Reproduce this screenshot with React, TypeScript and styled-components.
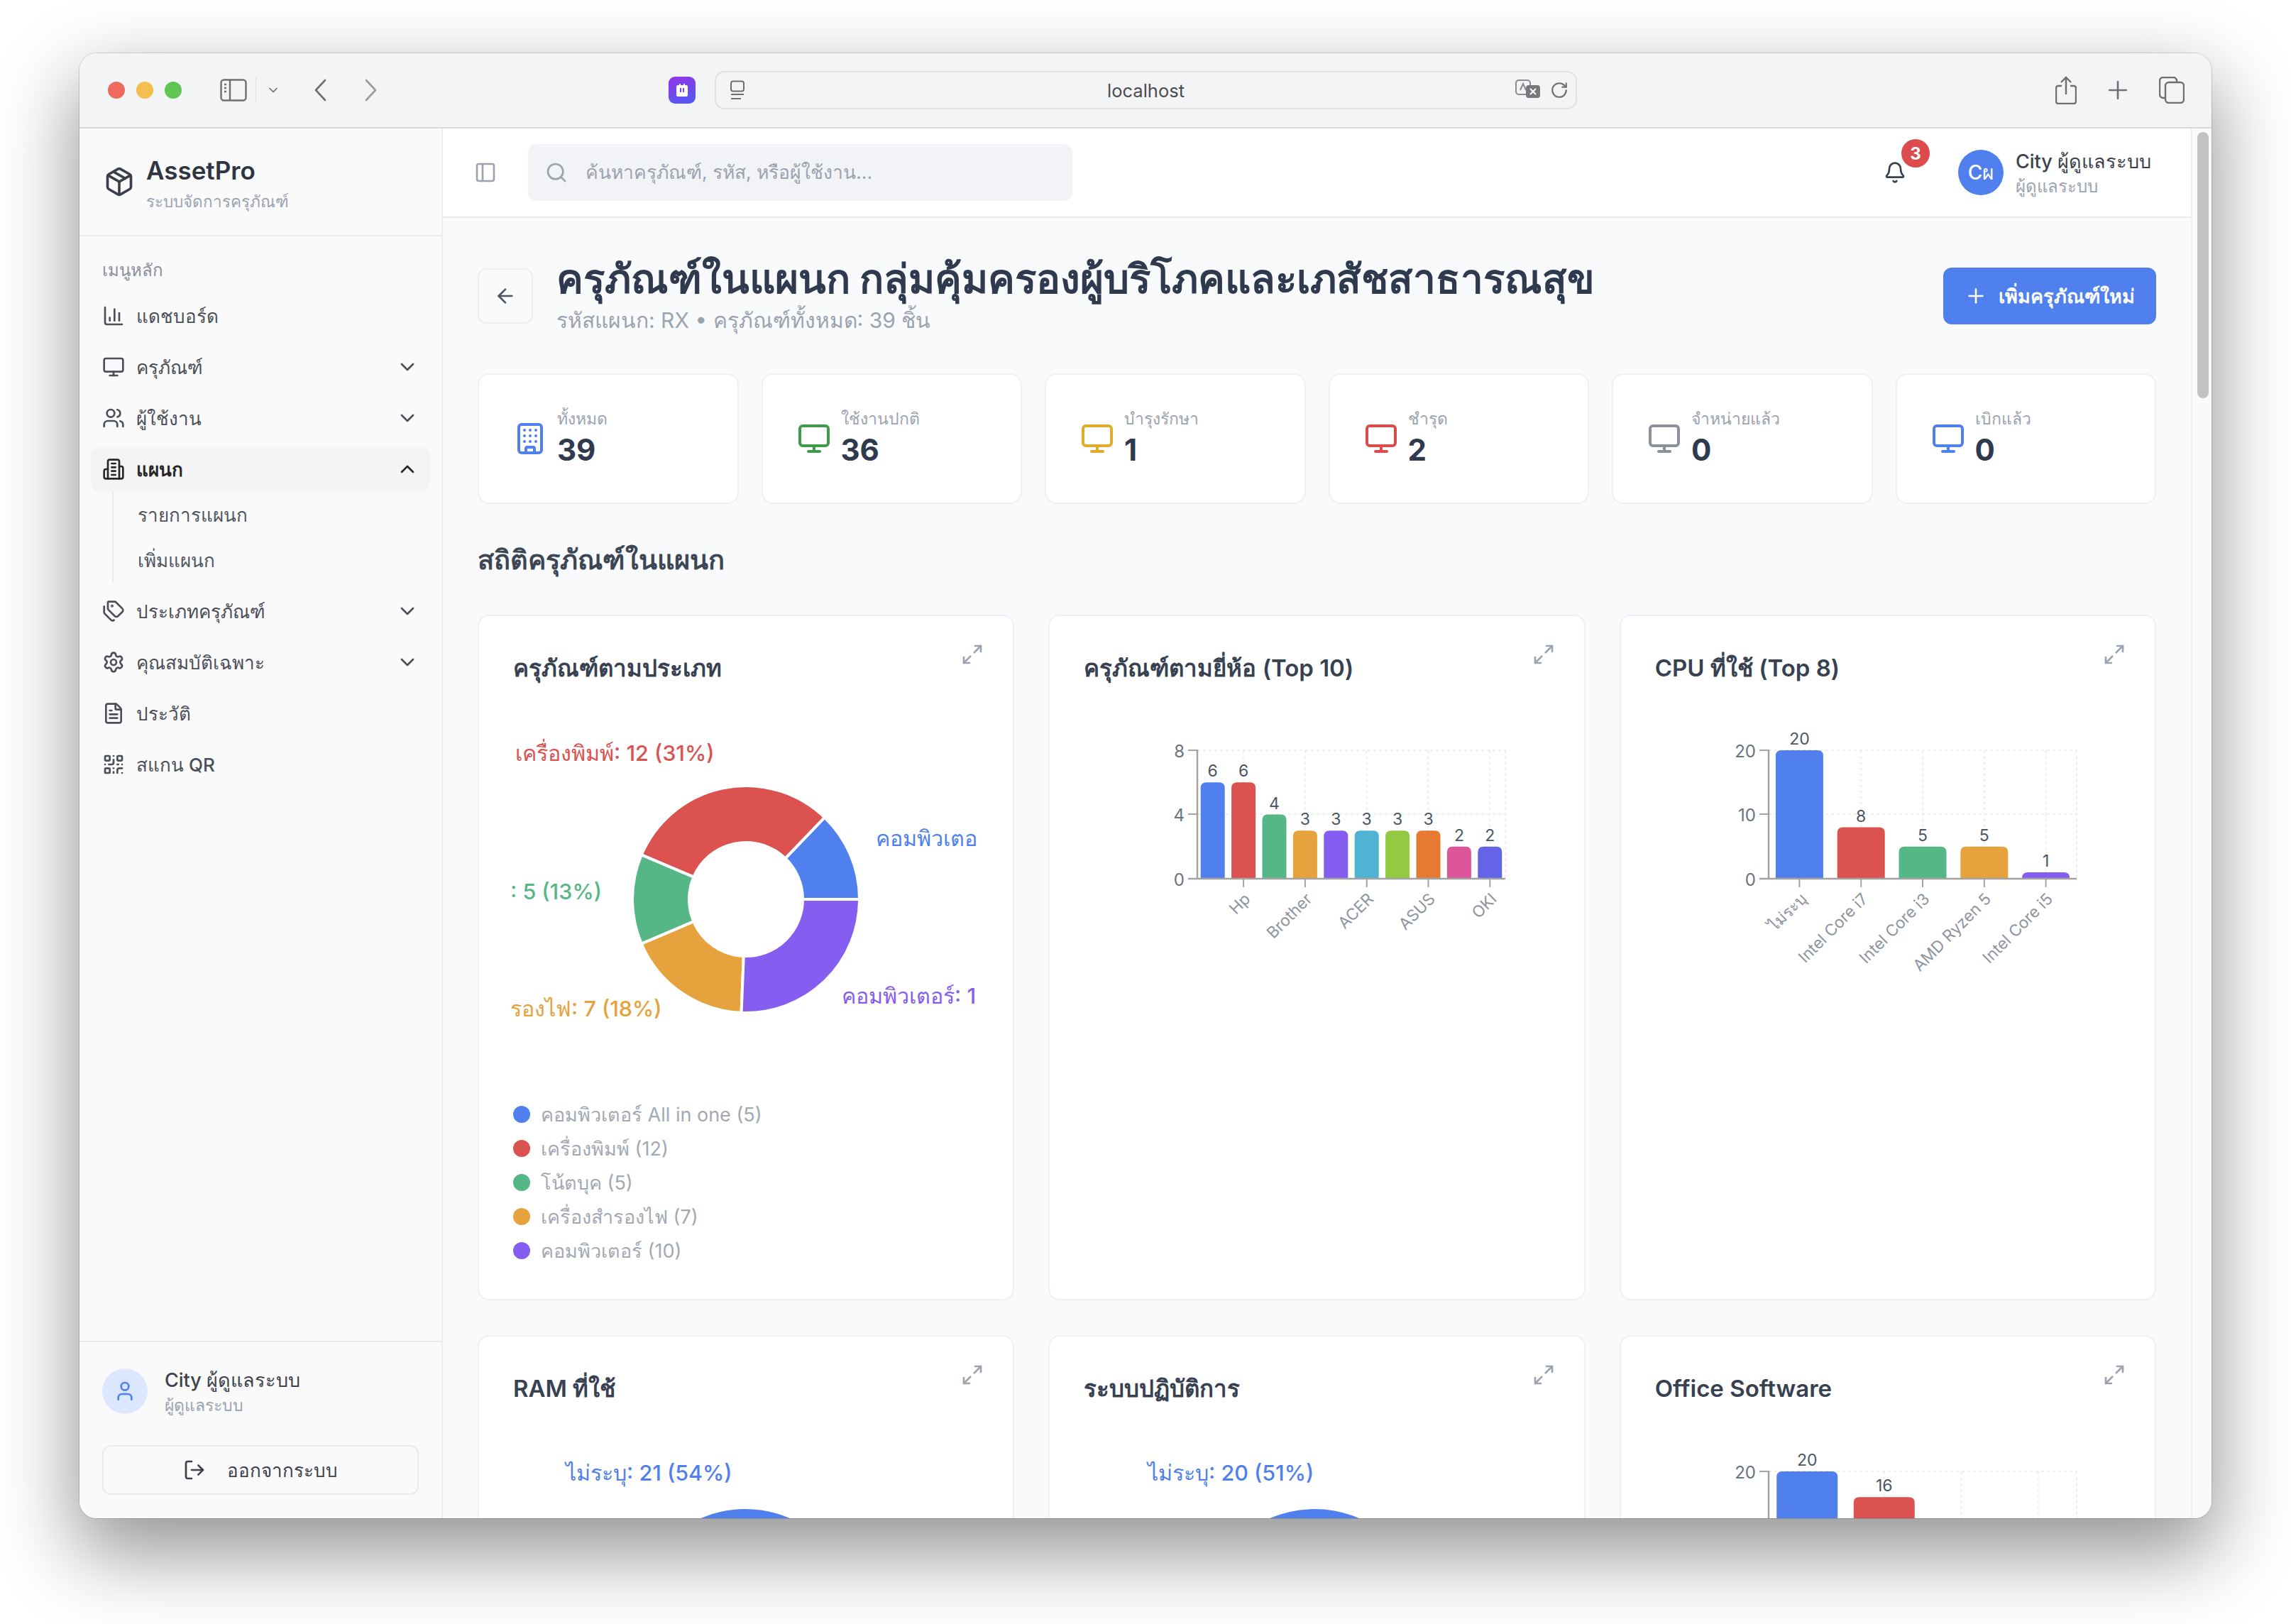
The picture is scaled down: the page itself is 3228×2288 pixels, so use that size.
import React, { FC, ReactNode } from "react";
import styled, { createGlobalStyle } from "styled-components";
import {
  ArrowLeft,
  Bell,
  Building,
  ChartColumn,
  ChevronDown,
  ChevronUp,
  FileText,
  LogOut,
  Maximize2,
  Monitor,
  Package,
  PanelLeft,
  Plus,
  QrCode,
  RotateCw,
  Search,
  Settings,
  Tags,
  User,
  Users,
} from "lucide-react";

const GlobalStyle = createGlobalStyle`
  html, body {
    margin: 0;
    padding: 0;
    background: #ffffff;
  }
  body {
    width: 3228px;
    height: 2288px;
    overflow: hidden;
    font-family: Inter, "Noto Sans", "Liberation Sans", sans-serif;
  }
  * { box-sizing: border-box; }
`;

const Page = styled.div`
  width: 3228px;
  height: 2288px;
  padding: 75px 112px 149px;
`;

const Window = styled.div`
  width: 3004px;
  height: 2064px;
  border-radius: 24px;
  overflow: hidden;
  display: flex;
  flex-direction: column;
  background: #ffffff;
  box-shadow: 0 0 0 1px rgba(0, 0, 0, 0.14), 0 44px 110px 6px rgba(0, 0, 0, 0.42);
`;

// browser chrome

const TitleBar = styled.div`
  height: 106px;
  flex: none;
  display: flex;
  align-items: center;
  position: relative;
  padding-left: 40px;
  background: #f3f4f6;
  border-bottom: 2px solid #d9dadc;
  color: #6e6f73;
`;

const Light = styled.span<{ $color: string }>`
  width: 24px;
  height: 24px;
  border-radius: 50%;
  margin-right: 16px;
  background: ${(p) => p.$color};
`;

const ChromeIcons = styled.div`
  display: flex;
  align-items: center;
  margin-left: 38px;
`;

const ChromeDivider = styled.span`
  width: 1px;
  height: 36px;
  margin: 0 14px 0 12px;
  background: #dedfe1;
`;

const NavArrows = styled.div`
  display: flex;
  align-items: center;
  gap: 52px;
  margin-left: 46px;
`;

const ExtensionBadge = styled.div`
  width: 38px;
  height: 38px;
  margin-left: 409px;
  border-radius: 9px;
  display: flex;
  align-items: center;
  justify-content: center;
  background: linear-gradient(160deg, #9333ea, #4f5df0);
`;

const AddressBar = styled.div`
  width: 1215px;
  height: 54px;
  margin-left: 27px;
  padding: 0 10px;
  border: 2px solid #e0e1e3;
  border-radius: 14px;
  display: flex;
  align-items: center;
`;

const AddressSide = styled.div<{ $end?: boolean }>`
  flex: 1 1 0;
  display: flex;
  align-items: center;
  gap: 13px;
  justify-content: ${(p) => (p.$end ? "flex-end" : "flex-start")};

  & > svg:first-child {
    margin-left: ${(p) => (p.$end ? 0 : 8)}px;
  }
`;

const AddressText = styled.span`
  font-size: 25.5px;
  color: #4b4c50;
`;

const ChromeRight = styled.div`
  display: flex;
  align-items: center;
  gap: 38px;
  margin-left: auto;
  margin-right: 38px;
`;

// app

const Body = styled.div`
  flex: 1;
  min-height: 0;
  display: flex;
`;

const Sidebar = styled.aside`
  width: 512px;
  flex: none;
  display: flex;
  flex-direction: column;
  background: #fafafa;
  border-right: 2px solid #eceef3;
`;

const Brand = styled.div`
  height: 152px;
  flex: none;
  display: flex;
  align-items: center;
  gap: 16px;
  padding: 0 34px;
  border-bottom: 2px solid #e8eaf0;
  color: #3a3f4a;
`;

const BrandText = styled.div`
  margin-top: 8px;
`;

const BrandName = styled.div`
  font-size: 35px;
  line-height: 44px;
  font-weight: 600;
  color: #2f3541;
`;

const BrandSub = styled.div`
  font-size: 22.5px;
  line-height: 36px;
  margin-top: 4px;
  color: #9ca3af;
`;

const Menu = styled.nav`
  flex: 1;
  padding: 32px 16px 0;
  display: flex;
  flex-direction: column;
  gap: 8px;
`;

const MenuHeading = styled.div`
  height: 32px;
  margin-bottom: 8px;
  padding-left: 16px;
  font-size: 24px;
  line-height: 32px;
  color: #8b9099;
`;

const MenuRow = styled.div<{ $active?: boolean }>`
  height: 64px;
  flex: none;
  display: flex;
  align-items: center;
  gap: 16px;
  padding: 0 16px;
  border-radius: 14px;
  font-size: 26px;
  font-weight: ${(p) => (p.$active ? 600 : 500)};
  color: ${(p) => (p.$active ? "#27272a" : "#4b4f58")};
  background: ${(p) => (p.$active ? "#f4f4f5" : "transparent")};
`;

const MenuLabel = styled.span`
  flex: 1;
`;

const SubMenu = styled.div`
  margin: -8px 0 0 30px;
  padding: 4px 0 4px 34px;
  border-left: 2px solid #e8eaf0;
  display: flex;
  flex-direction: column;
  gap: 8px;
`;

const SubItem = styled.div`
  height: 56px;
  display: flex;
  align-items: center;
  font-size: 26px;
  color: #52565f;
`;

const SideFooter = styled.div`
  flex: none;
  height: 250px;
  padding: 37px 32px 0;
  border-top: 2px solid #e8eaf0;
`;

const SideUser = styled.div`
  display: flex;
  align-items: center;
  gap: 24px;
  height: 64px;
`;

const SideAvatar = styled.div`
  width: 64px;
  height: 64px;
  border-radius: 50%;
  display: flex;
  align-items: center;
  justify-content: center;
  background: #dbe7fe;
  color: #4f80ee;
`;

const SideText = styled.div`
  margin-top: 4px;
`;

const SideName = styled.div`
  font-size: 27px;
  line-height: 36px;
  font-weight: 500;
  color: #3d424d;
`;

const SideRole = styled.div`
  font-size: 23px;
  line-height: 34px;
  color: #9ca3af;
`;

const LogoutButton = styled.div`
  height: 70px;
  margin-top: 44px;
  display: flex;
  align-items: center;
  justify-content: center;
  gap: 30px;
  border: 2px solid #e8eaf0;
  border-radius: 12px;
  font-size: 26px;
  font-weight: 500;
  color: #3d424d;
`;

const Main = styled.main`
  flex: 1;
  min-width: 0;
  display: flex;
  flex-direction: column;
  overflow: hidden;
  background: #f9fafc;
`;

const TopBar = styled.header`
  height: 126px;
  flex: none;
  display: flex;
  align-items: center;
  padding-left: 44px;
  background: #ffffff;
  border-bottom: 2px solid #e9ebf0;
  color: #9ca3af;
`;

const SearchBox = styled.div`
  width: 767px;
  height: 80px;
  margin-left: 44px;
  padding: 0 24px;
  display: flex;
  align-items: center;
  gap: 25px;
  border-radius: 12px;
  background: #f2f3f6;
  font-size: 26.5px;
  color: #9ca3af;
`;

const BellWrap = styled.div`
  position: relative;
  margin-left: auto;
  width: 32px;
  height: 32px;
  color: #374151;
`;

const Badge = styled.span`
  position: absolute;
  top: -31px;
  left: 25px;
  width: 40px;
  height: 40px;
  border-radius: 50%;
  display: flex;
  align-items: center;
  justify-content: center;
  background: #dc4c4c;
  color: #ffffff;
  font-size: 24px;
  font-weight: 700;
`;

const TopUser = styled.div`
  display: flex;
  align-items: center;
  gap: 17px;
  margin: 0 32px 0 73px;
  width: 296px;
`;

const TopAvatar = styled.div`
  width: 64px;
  height: 64px;
  flex: none;
  border-radius: 50%;
  display: flex;
  align-items: center;
  justify-content: center;
  background: #4f80ee;
  color: #ffffff;
  font-size: 28px;
  font-weight: 500;
`;

const TopText = styled.div`
  margin-top: 4px;
`;

const TopName = styled.div`
  font-size: 27px;
  line-height: 36px;
  font-weight: 500;
  color: #3d424d;
`;

const TopRole = styled.div`
  font-size: 24px;
  line-height: 34px;
  color: #9ca3af;
`;

const Content = styled.div`
  flex: 1;
  min-height: 0;
  overflow: hidden;
  padding: 52px 49px 0 49px;
`;

const PageHeader = styled.div`
  height: 116px;
  display: flex;
  align-items: center;
  gap: 33px;
  margin-bottom: 51px;
`;

const BackButton = styled.div`
  width: 78px;
  height: 78px;
  flex: none;
  display: flex;
  align-items: center;
  justify-content: center;
  border: 2px solid #eceef3;
  border-radius: 12px;
  color: #4b5563;
`;

const HeaderText = styled.div`
  flex: 1;
  min-width: 0;
`;

const PageTitle = styled.h1`
  margin: 0;
  font-size: 56.6px;
  line-height: 68px;
  font-weight: 700;
  color: #2f3a4f;
  white-space: nowrap;
`;

const PageSub = styled.div`
  font-size: 30px;
  line-height: 48px;
  color: #9ca3af;
`;

const AddButton = styled.div`
  width: 300px;
  height: 80px;
  flex: none;
  display: flex;
  align-items: center;
  justify-content: center;
  gap: 16px;
  border-radius: 12px;
  background: #4f80ee;
  color: #ffffff;
  font-size: 27px;
  font-weight: 600;
`;

const StatGrid = styled.div`
  display: grid;
  grid-template-columns: repeat(6, 1fr);
  gap: 32px;
`;

const StatCard = styled.div`
  height: 184px;
  padding: 0 48px;
  display: flex;
  align-items: center;
  gap: 14px;
  background: #ffffff;
  border: 2px solid #eef0f5;
  border-radius: 16px;
`;

const StatIcon = styled.div<{ $color: string }>`
  display: flex;
  color: ${(p) => p.$color};
`;

const StatText = styled.div`
  margin-bottom: 4px;
`;

const StatLabel = styled.div`
  font-size: 23px;
  line-height: 36px;
  color: #9ca3af;
`;

const StatValue = styled.div`
  font-size: 42px;
  line-height: 52px;
  font-weight: 700;
  color: #2f3a4f;
`;

const SectionTitle = styled.h2`
  margin: 53px 0;
  font-size: 38px;
  line-height: 50px;
  font-weight: 600;
  color: #3d4654;
`;

const ChartGrid = styled.div`
  display: grid;
  grid-template-columns: repeat(3, 1fr);
  gap: 49px 48px;
`;

const ChartCard = styled.section`
  position: relative;
  height: 966px;
  padding: 48px;
  background: #ffffff;
  border: 2px solid #eef0f5;
  border-radius: 16px;
`;

const ChartTitle = styled.h3`
  margin: 0 0 34px;
  font-size: 33px;
  line-height: 50px;
  font-weight: 600;
  color: #374151;
`;

const ExpandButton = styled.span`
  position: absolute;
  top: 38px;
  right: 41px;
  display: flex;
  color: #9ca3af;
`;

const ChartSvg = styled.svg`
  display: block;
  overflow: visible;
  font-family: Inter, "Noto Sans", "Liberation Sans", sans-serif;
`;

const Legend = styled.ul`
  list-style: none;
  margin: 46px 0 0;
  padding: 0;
`;

const LegendItem = styled.li`
  height: 48px;
  display: flex;
  align-items: center;
  gap: 15px;
  font-size: 27px;
  color: #a3a9b3;
`;

const LegendDot = styled.span<{ $color: string }>`
  width: 24px;
  height: 24px;
  border-radius: 50%;
  background: ${(p) => p.$color};
`;

const ScrollTrack = styled.div`
  width: 29px;
  flex: none;
  padding: 5px 6px 0 7px;
  background: #fafafa;
  border-left: 2px solid #eeeeee;
`;

const ScrollThumb = styled.div`
  width: 16px;
  height: 375px;
  border-radius: 8px;
  background: #c2c2c2;
`;

// chart drawing

const PALETTE = [
  "#4f80ee",
  "#dc5250",
  "#55b785",
  "#e6a23c",
  "#855df0",
  "#50b3d3",
  "#94ca42",
  "#e67a33",
  "#db5598",
  "#6464e6",
];

type Slice = { value: number; color: string };
type PieLabel = { text: string; x: number; y: number; color: string };

const polar = (cx: number, cy: number, r: number, deg: number) => {
  const a = (deg * Math.PI) / 180;
  return [cx + r * Math.cos(a), cy - r * Math.sin(a)];
};

const Donut: FC<{ slices: Slice[]; labels: PieLabel[]; cx: number; cy: number }> = ({
  slices,
  labels,
  cx,
  cy,
}) => {
  const total = slices.reduce((s, d) => s + d.value, 0);
  let start = 0;
  return (
    <ChartSvg width={656} height={500}>
      {slices.map((s, i) => {
        const end = start + (s.value / total) * 360;
        const large = end - start > 180 ? 1 : 0;
        const [x1, y1] = polar(cx, cy, 160, start);
        const [x2, y2] = polar(cx, cy, 160, end);
        const [x3, y3] = polar(cx, cy, 80, end);
        const [x4, y4] = polar(cx, cy, 80, start);
        start = end;
        return (
          <path
            key={i}
            d={`M${x1} ${y1}A160 160 0 ${large} 0 ${x2} ${y2}L${x3} ${y3}A80 80 0 ${large} 1 ${x4} ${y4}Z`}
            fill={s.color}
            stroke="#fff"
            strokeWidth={4}
          />
        );
      })}
      {labels.map((l) => (
        <text
          key={l.text}
          x={l.x}
          y={l.y}
          fill={l.color}
          fontSize={30.5}
          fontWeight={500}
          dominantBaseline="central"
        >
          {l.text}
        </text>
      ))}
    </ChartSvg>
  );
};

type BarChartProps = {
  values: number[];
  slots?: number;
  ticks: { slot: number; label?: string }[];
  yLabels: string[];
  max: number;
  barWidth: number;
  top?: number;
};

const AXIS = "#a3a3a3";

const BarChart: FC<BarChartProps> = ({ values, slots, ticks, yLabels, max, barWidth, top = 57 }) => {
  const left = 160;
  const right = 594;
  const base = top + 181;
  const mid = top + 90;
  const slot = (right - left) / (slots ?? values.length);
  const cx = (i: number) => left + slot * i + slot / 2;
  return (
    <ChartSvg width={656} height={500}>
      {[top, mid].map((y) => (
        <line key={y} x1={left} x2={right} y1={y} y2={y} stroke="#eeeeee" strokeDasharray="4 4" strokeWidth={2} />
      ))}
      {[...ticks.map((t) => cx(t.slot)), right].map((x) => (
        <line key={x} x1={x} x2={x} y1={top} y2={base} stroke="#eeeeee" strokeDasharray="4 4" strokeWidth={2} />
      ))}
      {values.map((v, i) => {
        const h = (v / max) * 181;
        const x = cx(i) - barWidth / 2;
        const y = base - h;
        const r = Math.min(8, h);
        return (
          <g key={i}>
            <path
              d={`M${x} ${base}V${y + r}Q${x} ${y} ${x + r} ${y}H${x + barWidth - r}Q${x + barWidth} ${y} ${x + barWidth} ${y + r}V${base}Z`}
              fill={PALETTE[i]}
            />
            <text x={cx(i)} y={y - 16} fill="#4b5563" fontSize={23} textAnchor="middle" dominantBaseline="central">
              {v}
            </text>
          </g>
        );
      })}
      <line x1={left} x2={left} y1={top - 1} y2={base + 1} stroke={AXIS} strokeWidth={2.5} />
      <line x1={left - 13} x2={right} y1={base} y2={base} stroke={AXIS} strokeWidth={2.5} />
      {[top, mid].map((y) => (
        <line key={y} x1={left - 13} x2={left} y1={y} y2={y} stroke={AXIS} strokeWidth={2} />
      ))}
      {yLabels.map((t, i) => (
        <text
          key={t}
          x={left - 18}
          y={[top, mid, base][i] + 1}
          fill="#6b7280"
          fontSize={24}
          textAnchor="end"
          dominantBaseline="central"
        >
          {t}
        </text>
      ))}
      {ticks.map((t) => (
        <g key={t.slot}>
          <line x1={cx(t.slot)} x2={cx(t.slot)} y1={base} y2={base + 12} stroke={AXIS} strokeWidth={2} />
          {t.label && (
            <text
              transform={`translate(${cx(t.slot) + 11} ${base + 30}) rotate(-45)`}
              fill="#8e949e"
              fontSize={22.5}
              textAnchor="end"
            >
              {t.label}
            </text>
          )}
        </g>
      ))}
    </ChartSvg>
  );
};

// icons that no package has in this shape

const SafariSidebarIcon = () => (
  <svg width="38" height="32" viewBox="0 0 38 32" fill="none" stroke="currentColor" strokeWidth="2.4">
    <rect x="1.5" y="1.5" width="35" height="29" rx="4" />
    <path d="M14 2v28" />
    <path d="M6 8h3M6 13h3M6 18h3" />
  </svg>
);

const NavChevron: FC<{ dir: "left" | "right"; muted?: boolean }> = ({ dir, muted }) => (
  <svg width="20" height="32" viewBox="0 0 20 32" fill="none" stroke={muted ? "#9a9b9f" : "currentColor"} strokeWidth="2.6" strokeLinecap="round" strokeLinejoin="round">
    <path d={dir === "left" ? "M17 2L4 16l13 14" : "M3 2l13 14L3 30"} />
  </svg>
);

const PageIcon = () => (
  <svg width="24" height="28" viewBox="0 0 24 28" fill="none" stroke="currentColor" strokeWidth="2">
    <rect x="3" y="1.5" width="18" height="14" rx="3" />
    <path d="M3 20h18M3 26h14" />
  </svg>
);

const TranslateIcon = () => (
  <svg width="36" height="30" viewBox="0 0 36 30" fill="none">
    <rect x="1" y="1" width="20" height="20" rx="4" stroke="#8a8b8f" strokeWidth="2" />
    <path d="M7 15l4-9 4 9" stroke="#8a8b8f" strokeWidth="2" />
    <rect x="15" y="8" width="20" height="18" rx="4" fill="#77787c" />
    <path d="M21 13l8 8M29 13l-8 8" stroke="#fff" strokeWidth="2" />
  </svg>
);

const ShareIcon = () => (
  <svg width="30" height="40" viewBox="0 0 30 40" fill="none" stroke="currentColor" strokeWidth="2.4">
    <path d="M9 14H4a3 3 0 0 0-3 3v19a3 3 0 0 0 3 3h22a3 3 0 0 0 3-3V17a3 3 0 0 0-3-3h-5" />
    <path d="M15 26V2M8 9l7-7 7 7" />
  </svg>
);

const TabsIcon = () => (
  <svg width="36" height="38" viewBox="0 0 36 38" fill="none" stroke="currentColor" strokeWidth="2.4">
    <rect x="9" y="8" width="26" height="29" rx="5" />
    <path d="M9 30H6a5 5 0 0 1-5-5V6a5 5 0 0 1 5-5h14a5 5 0 0 1 5 5v2" />
  </svg>
);

const ExtensionGlyph = () => (
  <svg width="20" height="20" viewBox="0 0 20 20" fill="#fff">
    <path d="M2 5a2 2 0 0 1 2-2h2V1h2v2h4V1h2v2h2a2 2 0 0 1 2 2v12a2 2 0 0 1-2 2H4a2 2 0 0 1-2-2z" />
    <path d="M7 7h2v6H7zM11 7h2v6h-2z" fill="#6d46ec" />
  </svg>
);

const TowerIcon = () => (
  <svg width="32" height="32" viewBox="0 0 24 24" fill="none" stroke="currentColor" strokeWidth="2" strokeLinecap="round" strokeLinejoin="round">
    <path d="M6 22V4a2 2 0 0 1 2-2h8a2 2 0 0 1 2 2v18Z" />
    <path d="M6 12H4a2 2 0 0 0-2 2v6a2 2 0 0 0 2 2h2" />
    <path d="M18 9h2a2 2 0 0 1 2 2v9a2 2 0 0 1-2 2h-2" />
    <path d="M10 6h4M10 10h4M10 14h4M10 18h4" />
  </svg>
);

// page data

const menuBefore = [
  { icon: <ChartColumn size={32} />, label: "แดชบอร์ด" },
  { icon: <Monitor size={32} />, label: "ครุภัณฑ์", chevron: true },
  { icon: <Users size={32} />, label: "ผู้ใช้งาน", chevron: true },
];

const menuAfter = [
  { icon: <Tags size={32} />, label: "ประเภทครุภัณฑ์", chevron: true },
  { icon: <Settings size={32} />, label: "คุณสมบัติเฉพาะ", chevron: true },
  { icon: <FileText size={32} />, label: "ประวัติ" },
  { icon: <QrCode size={32} />, label: "สแกน QR" },
];

const stats = [
  { icon: <Building size={48} />, color: "#4f80ee", label: "ทั้งหมด", value: 39 },
  { icon: <Monitor size={48} />, color: "#3f9a4c", label: "ใช้งานปกติ", value: 36 },
  { icon: <Monitor size={48} />, color: "#e0ac2b", label: "บำรุงรักษา", value: 1 },
  { icon: <Monitor size={48} />, color: "#dc4c4c", label: "ชำรุด", value: 2 },
  { icon: <Monitor size={48} />, color: "#8b929c", label: "จำหน่ายแล้ว", value: 0 },
  { icon: <Monitor size={48} />, color: "#4f80ee", label: "เบิกแล้ว", value: 0 },
];

const typeSlices = [5, 12, 5, 7, 10].map((value, i) => ({ value, color: PALETTE[i] }));

const typeLabels: PieLabel[] = [
  { text: "เครื่องพิมพ์: 12 (31%)", x: 3, y: 60, color: PALETTE[1] },
  { text: "คอมพิวเตอ", x: 511, y: 180, color: PALETTE[0] },
  { text: ": 5 (13%)", x: -4, y: 255, color: PALETTE[2] },
  { text: "รองไฟ: 7 (18%)", x: -4, y: 420, color: PALETTE[3] },
  { text: "คอมพิวเตอร์: 1", x: 463, y: 402, color: PALETTE[4] },
];

const legend = [
  "คอมพิวเตอร์ All in one (5)",
  "เครื่องพิมพ์ (12)",
  "โน้ตบุค (5)",
  "เครื่องสำรองไฟ (7)",
  "คอมพิวเตอร์ (10)",
];

const Card: FC<{ title: string; children: ReactNode }> = ({ title, children }) => (
  <ChartCard>
    <ChartTitle>{title}</ChartTitle>
    <ExpandButton>
      <Maximize2 size={32} />
    </ExpandButton>
    {children}
  </ChartCard>
);

const App: FC = () => (
  <Page>
    <GlobalStyle />
    <Window>
      <TitleBar>
        <Light $color="#ec6a5e" />
        <Light $color="#f4bf4f" />
        <Light $color="#61c554" />
        <ChromeIcons>
          <SafariSidebarIcon />
          <ChromeDivider />
          <ChevronDown size={20} />
        </ChromeIcons>
        <NavArrows>
          <NavChevron dir="left" />
          <NavChevron dir="right" muted />
        </NavArrows>
        <ExtensionBadge>
          <ExtensionGlyph />
        </ExtensionBadge>
        <AddressBar>
          <AddressSide>
            <PageIcon />
          </AddressSide>
          <AddressText>localhost</AddressText>
          <AddressSide $end>
            <TranslateIcon />
            <RotateCw size={26} />
          </AddressSide>
        </AddressBar>
        <ChromeRight>
          <ShareIcon />
          <Plus size={40} strokeWidth={1.6} />
          <TabsIcon />
        </ChromeRight>
      </TitleBar>
      <Body>
        <Sidebar>
          <Brand>
            <Package size={44} />
            <BrandText>
              <BrandName>AssetPro</BrandName>
              <BrandSub>ระบบจัดการครุภัณฑ์</BrandSub>
            </BrandText>
          </Brand>
          <Menu>
            <MenuHeading>เมนูหลัก</MenuHeading>
            {menuBefore.map((m) => (
              <MenuRow key={m.label}>
                {m.icon}
                <MenuLabel>{m.label}</MenuLabel>
                {m.chevron && <ChevronDown size={32} />}
              </MenuRow>
            ))}
            <MenuRow $active>
              <TowerIcon />
              <MenuLabel>แผนก</MenuLabel>
              <ChevronUp size={32} />
            </MenuRow>
            <SubMenu>
              <SubItem>รายการแผนก</SubItem>
              <SubItem>เพิ่มแผนก</SubItem>
            </SubMenu>
            {menuAfter.map((m) => (
              <MenuRow key={m.label}>
                {m.icon}
                <MenuLabel>{m.label}</MenuLabel>
                {m.chevron && <ChevronDown size={32} />}
              </MenuRow>
            ))}
          </Menu>
          <SideFooter>
            <SideUser>
              <SideAvatar>
                <User size={32} />
              </SideAvatar>
              <SideText>
                <SideName>City ผู้ดูแลระบบ</SideName>
                <SideRole>ผู้ดูแลระบบ</SideRole>
              </SideText>
            </SideUser>
            <LogoutButton>
              <LogOut size={32} />
              ออกจากระบบ
            </LogoutButton>
          </SideFooter>
        </Sidebar>
        <Main>
          <TopBar>
            <PanelLeft size={32} />
            <SearchBox>
              <Search size={32} />
              ค้นหาครุภัณฑ์, รหัส, หรือผู้ใช้งาน...
            </SearchBox>
            <BellWrap>
              <Bell size={32} />
              <Badge>3</Badge>
            </BellWrap>
            <TopUser>
              <TopAvatar>Cผ</TopAvatar>
              <TopText>
                <TopName>City ผู้ดูแลระบบ</TopName>
                <TopRole>ผู้ดูแลระบบ</TopRole>
              </TopText>
            </TopUser>
          </TopBar>
          <Content>
            <PageHeader>
              <BackButton>
                <ArrowLeft size={32} />
              </BackButton>
              <HeaderText>
                <PageTitle>ครุภัณฑ์ในแผนก กลุ่มคุ้มครองผู้บริโภคและเภสัชสาธารณสุข</PageTitle>
                <PageSub>รหัสแผนก: RX • ครุภัณฑ์ทั้งหมด: 39 ชิ้น</PageSub>
              </HeaderText>
              <AddButton>
                <Plus size={32} />
                เพิ่มครุภัณฑ์ใหม่
              </AddButton>
            </PageHeader>
            <StatGrid>
              {stats.map((s) => (
                <StatCard key={s.label}>
                  <StatIcon $color={s.color}>{s.icon}</StatIcon>
                  <StatText>
                    <StatLabel>{s.label}</StatLabel>
                    <StatValue>{s.value}</StatValue>
                  </StatText>
                </StatCard>
              ))}
            </StatGrid>
            <SectionTitle>สถิติครุภัณฑ์ในแผนก</SectionTitle>
            <ChartGrid>
              <Card title="ครุภัณฑ์ตามประเภท">
                <Donut slices={typeSlices} labels={typeLabels} cx={328} cy={267} />
                <Legend>
                  {legend.map((l, i) => (
                    <LegendItem key={l}>
                      <LegendDot $color={PALETTE[i]} />
                      {l}
                    </LegendItem>
                  ))}
                </Legend>
              </Card>
              <Card title="ครุภัณฑ์ตามยี่ห้อ (Top 10)">
                <BarChart
                  values={[6, 6, 4, 3, 3, 3, 3, 3, 2, 2]}
                  ticks={[
                    { slot: 1, label: "Hp" },
                    { slot: 3, label: "Brother" },
                    { slot: 5, label: "ACER" },
                    { slot: 7, label: "ASUS" },
                    { slot: 9, label: "OKI" },
                  ]}
                  yLabels={["8", "4", "0"]}
                  max={8}
                  barWidth={34}
                />
              </Card>
              <Card title="CPU ที่ใช้ (Top 8)">
                <BarChart
                  values={[20, 8, 5, 5, 1]}
                  ticks={[
                    { slot: 0, label: "ไม่ระบุ" },
                    { slot: 1, label: "Intel Core i7" },
                    { slot: 2, label: "Intel Core i3" },
                    { slot: 3, label: "AMD Ryzen 5" },
                    { slot: 4, label: "Intel Core i5" },
                  ]}
                  yLabels={["20", "10", "0"]}
                  max={20}
                  barWidth={67}
                />
              </Card>
              <Card title="RAM ที่ใช้">
                <Donut
                  slices={[{ value: 21, color: PALETTE[0] }, { value: 18, color: PALETTE[1] }]}
                  labels={[{ text: "ไม่ระบุ: 21 (54%)", x: 74, y: 59, color: PALETTE[0] }]}
                  cx={327}
                  cy={269}
                />
              </Card>
              <Card title="ระบบปฏิบัติการ">
                <Donut
                  slices={[{ value: 20, color: PALETTE[0] }, { value: 19, color: PALETTE[1] }]}
                  labels={[{ text: "ไม่ระบุ: 20 (51%)", x: 90, y: 59, color: PALETTE[0] }]}
                  cx={325}
                  cy={269}
                />
              </Card>
              <Card title="Office Software">
                <BarChart
                  values={[20, 16]}
                  slots={4}
                  ticks={[{ slot: 1 }, { slot: 2 }, { slot: 3 }]}
                  yLabels={["20"]}
                  max={20}
                  barWidth={86}
                  top={58}
                />
              </Card>
            </ChartGrid>
          </Content>
        </Main>
        <ScrollTrack>
          <ScrollThumb />
        </ScrollTrack>
      </Body>
    </Window>
  </Page>
);

export default App;
